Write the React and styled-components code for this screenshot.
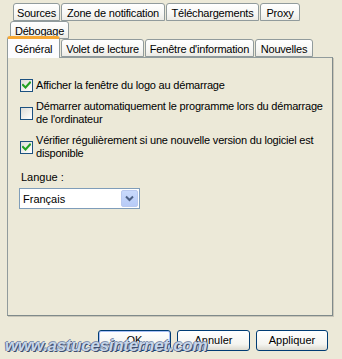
import React from 'react'
import styled, { createGlobalStyle } from 'styled-components'

const GlobalStyle = createGlobalStyle`
	html, body {
		margin: 0;
		padding: 0;
		background: #ece9d8;
	}
	body {
		font-family: 'Liberation Sans', Arial, sans-serif;
		font-size: 11px;
		color: #000000;
	}
`

const Dialog = styled.div`
	position: relative;
	width: 342px;
	height: 359px;
	background: #ece9d8;
	overflow: hidden;
	display: flex;
	flex-direction: column;
`

const TabRow = styled.div`
	display: flex;
	align-items: flex-end;
	gap: 1px;
	height: 18px;
	margin-left: ${(p) => p.$indent}px;
	margin-top: ${(p) => p.$top || 0}px;
`

const Tab = styled.div`
	position: relative;
	z-index: ${(p) => (p.$active ? 2 : 1)};
	box-sizing: border-box;
	width: ${(p) => p.$width}px;
	height: ${(p) => (p.$active ? 22 : 18)}px;
	margin-bottom: ${(p) => (p.$active ? -1 : 0)}px;
	display: flex;
	align-items: center;
	justify-content: center;
	white-space: nowrap;
	letter-spacing: -0.2px;
	border: 1px solid #919b9c;
	border-bottom: ${(p) => (p.$active ? 'none' : '1px solid #919b9c')};
	border-radius: 3px 3px 0 0;
	background: ${(p) =>
		p.$active
			? '#fcfcfe'
			: 'linear-gradient(to bottom, #ffffff 0%, #f7f7f4 60%, #ecebe5 100%)'};
	border-top: ${(p) => (p.$active ? '3px solid #f7a834' : '1px solid #919b9c')};
	padding-top: ${(p) => (p.$active ? 0 : 1)}px;
`

const Panel = styled.div`
	position: relative;
	z-index: 1;
	box-sizing: border-box;
	margin-left: 7px;
	width: 326px;
	height: 259px;
	background: #ece9d8;
	border: 1px solid #919b9c;
	border-right-color: #7f8a8b;
	border-bottom-color: #7f8a8b;
	box-shadow: 1px 1px 0 #c9c6b8;
	padding: 21px 0 0 12px;
	display: flex;
	flex-direction: column;
	align-items: flex-start;
`

const OptionList = styled.div`
	display: flex;
	flex-direction: column;
	gap: 8px;
`

const Option = styled.label`
	display: flex;
	align-items: center;
	gap: 3px;
	width: 308px;
`

const CheckBox = styled.span`
	flex: 0 0 auto;
	box-sizing: border-box;
	width: 13px;
	height: 13px;
	border: 1px solid #1c5180;
	background: linear-gradient(135deg, #dcdcd7 0%, #f2f2ee 60%, #ffffff 100%);
	display: flex;
	align-items: center;
	justify-content: center;
`

const OptionText = styled.span`
	line-height: 13px;
	letter-spacing: -0.2px;
`

const FieldLabel = styled.div`
	margin-top: 11px;
	margin-left: 1px;
	line-height: 13px;
`

const Combo = styled.div`
	box-sizing: border-box;
	margin-top: 4px;
	margin-left: -1px;
	width: 121px;
	height: 21px;
	background: #ffffff;
	border: 1px solid #7f9db9;
	display: flex;
	align-items: center;
	justify-content: space-between;
	padding: 1px 1px 1px 3px;
`

const ComboButton = styled.span`
	box-sizing: border-box;
	width: 17px;
	height: 17px;
	border: 1px solid #b9c9ef;
	border-radius: 2px;
	background: linear-gradient(to bottom, #c9dafc 0%, #b7cbf7 100%);
	display: flex;
	align-items: center;
	justify-content: center;
`

const ButtonBar = styled.div`
	display: flex;
	justify-content: flex-end;
	gap: 6px;
	margin-top: 14px;
	padding-right: 14px;
`

const Button = styled.button`
	box-sizing: border-box;
	width: ${(p) => p.$width}px;
	height: 21px;
	font-family: 'Liberation Sans', Arial, sans-serif;
	font-size: 11px;
	color: #000000;
	border: 1px solid #003c74;
	border-radius: 3px;
	background: linear-gradient(to bottom, #ffffff 0%, #f4f4f0 70%, #dcdad0 100%);
	box-shadow: ${(p) => (p.$default ? 'inset 0 0 0 1px #a8bff5' : 'none')};
	padding: 0 0 2px;
`

const Watermark = styled.div`
	position: absolute;
	left: 5px;
	top: 336px;
	z-index: 5;
	font-family: 'Liberation Sans', Arial, sans-serif;
	font-size: 17px;
	font-weight: bold;
	font-style: italic;
	letter-spacing: -0.3px;
	color: #c6d6ea;
	text-shadow: 1px 1px 0 #3e4e6e, -1px 0 0 #6a7a96, 0 -1px 0 #8494b0;
	pointer-events: none;
`

const Check = () => (
	<svg width='9' height='9' viewBox='0 0 9 9'>
		<path
			d='M1 4 L3.5 6.5 L8 1.5'
			fill='none'
			stroke='#21a121'
			strokeWidth='2'
			strokeLinecap='square'
		/>
	</svg>
)

const Chevron = () => (
	<svg width='9' height='7' viewBox='0 0 9 7'>
		<path
			d='M1 1.5 L4.5 5 L8 1.5'
			fill='none'
			stroke='#4d6185'
			strokeWidth='2'
		/>
	</svg>
)

const options = [
	{ text: 'Afficher la fenêtre du logo au démarrage', checked: true },
	{
		text: "Démarrer automatiquement le programme lors du démarrage de l'ordinateur",
		checked: false,
	},
	{
		text: 'Vérifier régulièrement si une nouvelle version du logiciel est disponible',
		checked: true,
	},
]

export default function App() {
	return (
		<>
			<GlobalStyle />
			<Dialog>
				<TabRow $indent={13} $top={3}>
					<Tab $width={47}>Sources</Tab>
					<Tab $width={104}>Zone de notification</Tab>
					<Tab $width={93}>Téléchargements</Tab>
					<Tab $width={40}>Proxy</Tab>
				</TabRow>
				<TabRow $indent={10}>
					<Tab $width={59}>Débogage</Tab>
				</TabRow>
				<TabRow $indent={7}>
					<Tab $width={53} $active>
						Général
					</Tab>
					<Tab $width={83}>Volet de lecture</Tab>
					<Tab $width={109}>Fenêtre d'information</Tab>
					<Tab $width={58}>Nouvelles</Tab>
				</TabRow>
				<Panel>
					<OptionList>
						{options.map((o) => (
							<Option key={o.text}>
								<CheckBox>{o.checked && <Check />}</CheckBox>
								<OptionText>{o.text}</OptionText>
							</Option>
						))}
					</OptionList>
					<FieldLabel>Langue :</FieldLabel>
					<Combo>
						<span>Français</span>
						<ComboButton>
							<Chevron />
						</ComboButton>
					</Combo>
				</Panel>
				<ButtonBar>
					<Button $width={73} $default>
						OK
					</Button>
					<Button $width={73}>Annuler</Button>
					<Button $width={72}>Appliquer</Button>
				</ButtonBar>
				<Watermark>www.astucesinternet.com</Watermark>
			</Dialog>
		</>
	)
}
